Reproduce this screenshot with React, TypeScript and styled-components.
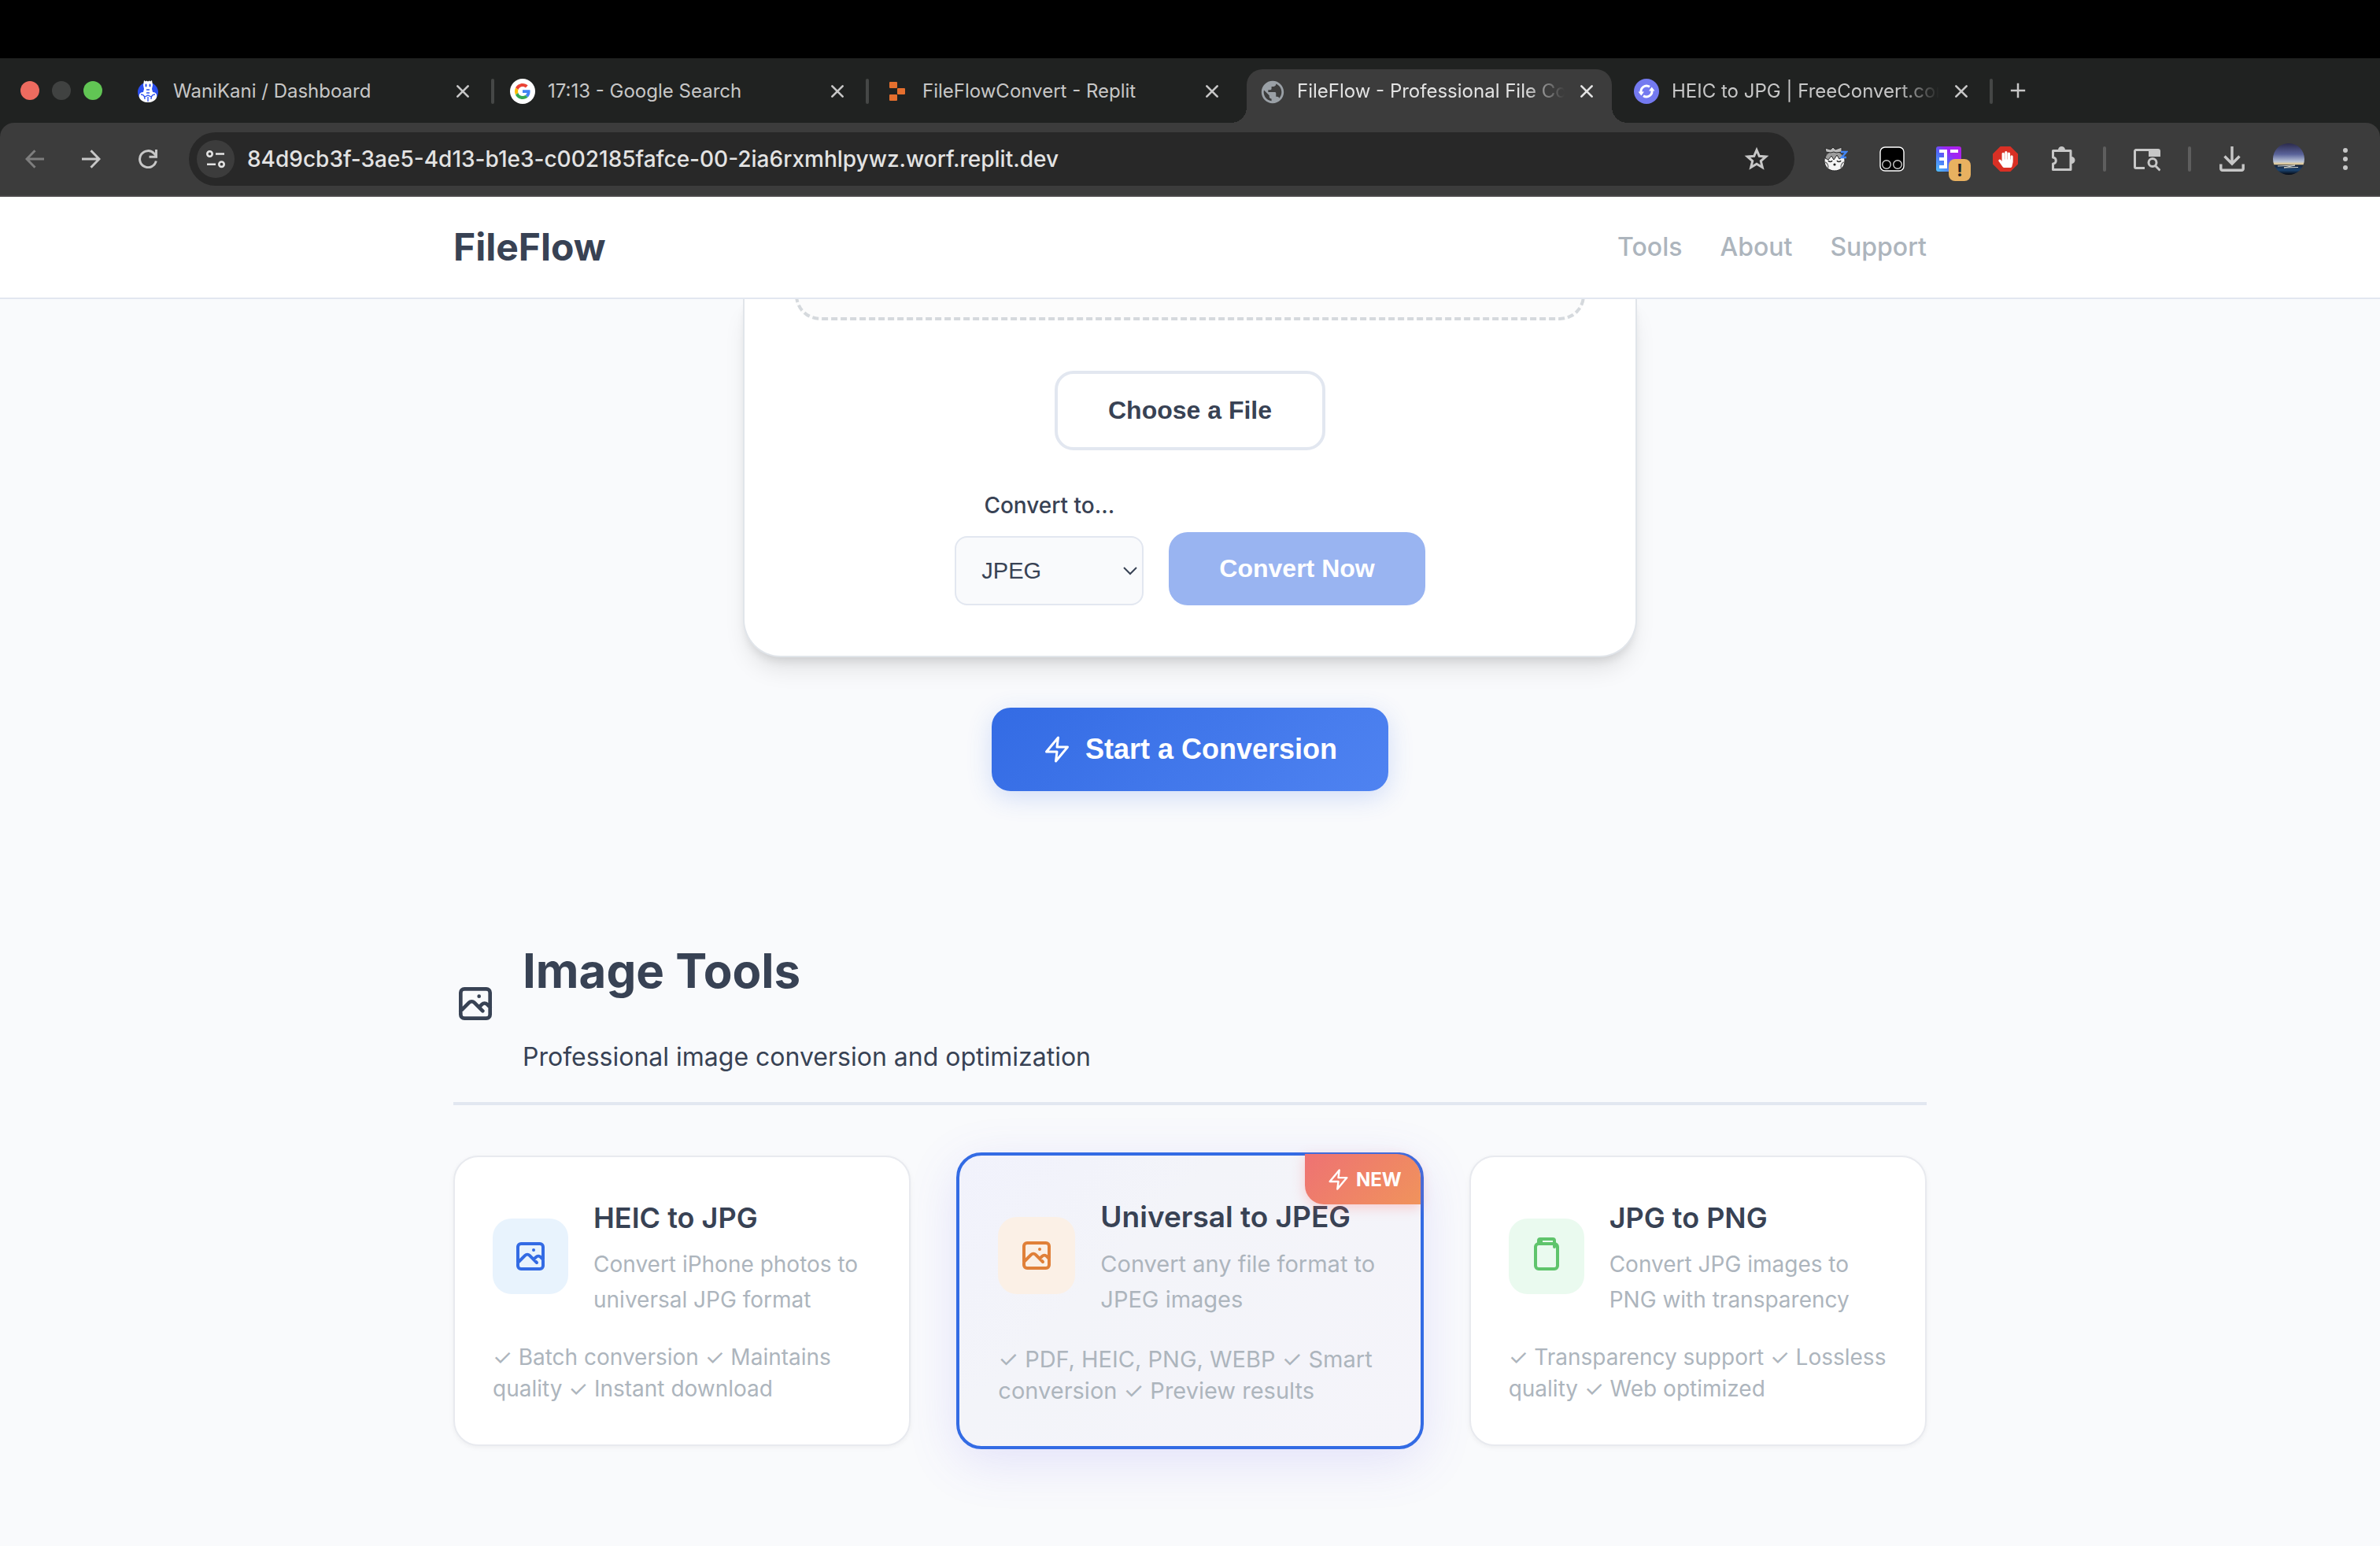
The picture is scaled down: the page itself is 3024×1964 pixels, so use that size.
import React, { ReactNode, useState } from 'react';
import styled, { createGlobalStyle, css } from 'styled-components';
import { MdPublic } from 'react-icons/md';
import { FaHandPaper } from 'react-icons/fa';

const color = {
  ink: '#384254',
  muted: '#adb5bd',
  line: '#e2e7f0',
  page: '#f9fafc',
  brand: '#336be4',
  strip: '#202221',
  toolbar: '#3c3c3c',
  omnibox: '#282828',
  chromeIcon: '#c7c7c7',
};

const ui = `Inter, 'Liberation Sans', sans-serif`;
const control = `'Liberation Sans', Arial, sans-serif`;

const GlobalStyle = createGlobalStyle`
  * { box-sizing: border-box; }
  body { margin: 0; background: ${color.page}; }
  h1, h2, h3, p { margin: 0; }
  button { border: 0; padding: 0; background: none; cursor: pointer; }
  svg { display: block; flex: none; }
`;

const Screen = styled.div`
  display: flex;
  flex-direction: column;
  height: 100vh;
  overflow: hidden;
  font-family: ${ui};
  color: ${color.ink};
`;

/* ---------- browser frame ---------- */

const Notch = styled.div`
  flex: none;
  height: 74px;
  background: #000;
`;

const TabStrip = styled.div`
  display: flex;
  flex: none;
  align-items: stretch;
  height: 82px;
  padding-left: 26px;
  background: ${color.strip};
`;

const Lights = styled.div`
  display: flex;
  align-items: center;
  gap: 16px;
  width: 126px;
`;

const Light = styled.span<{ $fill: string }>`
  width: 24px;
  height: 24px;
  border-radius: 50%;
  background: ${(p) => p.$fill};
`;

const Tab = styled.div<{ $active?: boolean }>`
  position: relative;
  display: flex;
  align-items: center;
  width: 476px;
  padding: 2px 0 0 20px;
  color: ${(p) => (p.$active ? '#e3e3e3' : '#c7c7c7')};

  ${(p) =>
    p.$active &&
    css`
      &::before {
        content: '';
        position: absolute;
        inset: 14px 8px 0 4px;
        border-radius: 20px 20px 0 0;
        background: ${color.toolbar};
      }
      &::after {
        content: '';
        position: absolute;
        left: -16px;
        right: -12px;
        bottom: 0;
        height: 20px;
        background: radial-gradient(circle at 0 0, transparent 20px, ${color.toolbar} 20px) left / 20px 20px no-repeat,
          radial-gradient(circle at 100% 0, transparent 20px, ${color.toolbar} 20px) right / 20px 20px no-repeat;
      }
      & > * {
        z-index: 1;
      }
    `}
`;

const Favicon = styled.span`
  display: grid;
  place-items: center;
  flex: none;
  width: 32px;
  height: 32px;
  margin-right: 16px;
`;

const TabTitle = styled.span<{ $fade?: boolean }>`
  flex: 1;
  min-width: 0;
  overflow: hidden;
  white-space: nowrap;
  font-size: 24px;
  line-height: 32px;
  ${(p) => p.$fade && 'mask-image: linear-gradient(to right, #000 288px, transparent 340px);'}
`;

const TabClose = styled.button`
  display: grid;
  place-items: center;
  flex: none;
  width: 32px;
  height: 32px;
  margin: 0 20px 0 8px;
  color: inherit;
`;

const TabRule = styled.span<{ $hidden?: boolean }>`
  flex: none;
  width: 4px;
  height: 32px;
  border-radius: 2px;
  background: ${(p) => (p.$hidden ? 'transparent' : '#454746')};
`;

const NewTab = styled.button`
  display: grid;
  place-items: center;
  width: 64px;
  color: ${color.chromeIcon};
`;

const ToolbarShell = styled.div`
  flex: none;
  background: ${color.strip};
`;

const Toolbar = styled.div`
  display: flex;
  align-items: center;
  height: 94px;
  padding: 0 8px;
  border-bottom: 2px solid #4a4749;
  border-radius: 18px 18px 0 0;
  background: ${color.toolbar};
`;

const ToolButton = styled.button<{ $dim?: boolean }>`
  position: relative;
  display: grid;
  place-items: center;
  flex: none;
  width: 72px;
  height: 68px;
  color: ${(p) => (p.$dim ? '#7e7e7e' : color.chromeIcon)};
`;

const ToolRule = styled.span`
  flex: none;
  width: 4px;
  height: 32px;
  margin: 0 16px;
  border-radius: 2px;
  background: #5e5e5e;
`;

const Omnibox = styled.div`
  display: flex;
  flex: 1;
  align-items: center;
  height: 68px;
  margin: 0 16px;
  padding: 0 12px 0 10px;
  border-radius: 34px;
  background: ${color.omnibox};
`;

const SiteInfo = styled.button`
  display: grid;
  place-items: center;
  width: 48px;
  height: 48px;
  border-radius: 50%;
  background: ${color.toolbar};
  color: #e3e3e3;
`;

const Address = styled.input`
  flex: 1;
  min-width: 0;
  height: 48px;
  margin-left: 16px;
  padding: 0;
  border: 0;
  outline: 0;
  background: none;
  color: #e3e3e3;
  font-family: ${ui};
  font-size: 28px;
  font-weight: 450;
`;

const AlertBadge = styled.span`
  position: absolute;
  left: 36px;
  top: 34px;
  width: 28px;
  height: 28px;
  border-radius: 8px;
  background: #e8b160;
  color: #202124;
  font: 700 22px/28px ${ui};
  text-align: center;
`;

const BlockSign = styled.span`
  display: grid;
  place-items: center;
  width: 32px;
  height: 32px;
  background: #d93025;
  color: #fff;
  clip-path: polygon(30% 0, 70% 0, 100% 30%, 100% 70%, 70% 100%, 30% 100%, 0 70%, 0 30%);
`;

/* ---------- page ---------- */

const SiteHeader = styled.header`
  z-index: 2;
  flex: none;
  padding: 0 64px;
  border-bottom: 2px solid ${color.line};
  background: #fff;
`;

const HeaderInner = styled.div`
  display: flex;
  align-items: center;
  justify-content: space-between;
  max-width: 1872px;
  height: 128px;
  margin: 0 auto;
`;

const Brand = styled.h1`
  font-size: 48px;
  font-weight: 700;
  line-height: 76px;
`;

const Nav = styled.nav`
  display: flex;
  gap: 48px;
`;

const NavLink = styled.a`
  color: ${color.muted};
  font-size: 32px;
  font-weight: 500;
  line-height: 52px;
  text-decoration: none;
`;

const Main = styled.main`
  display: flex;
  flex: 1;
  flex-direction: column;
  align-items: center;
  padding: 0 64px;
  background: ${color.page};
`;

const UploadCard = styled.section`
  display: flex;
  flex-direction: column;
  align-items: center;
  width: 100%;
  max-width: 1136px;
  padding: 0 64px 64px;
  border: 2px solid #e1e5ea;
  border-top: 0;
  border-radius: 0 0 48px 48px;
  background: #fff;
  box-shadow: 0 20px 30px -6px rgba(0, 0, 0, 0.1), 0 8px 12px -4px rgba(0, 0, 0, 0.1);
`;

const DropZoneClip = styled.div`
  align-self: stretch;
  display: flex;
  flex-direction: column;
  justify-content: flex-end;
  height: 27px;
  margin-bottom: 64px;
  overflow: hidden;
`;

const DropZone = styled.div`
  flex: none;
  height: 200px;
  border: 4px dashed #d5d9dd;
  border-radius: 32px;
  background: #fcfcfc;
`;

const Button = styled.button<{ $kind: 'outline' | 'solid' | 'hero' }>`
  display: inline-flex;
  align-items: center;
  justify-content: center;
  gap: 18px;
  border-radius: 24px;
  font-family: ${control};
  font-weight: 700;
  font-size: 32px;
  line-height: 37px;
  white-space: nowrap;

  ${(p) =>
    p.$kind === 'outline' &&
    css`
      padding: 28px 64px;
      border: 4px solid ${color.line};
      background: #fff;
      color: ${color.ink};
    `}
  ${(p) =>
    p.$kind === 'solid' &&
    css`
      padding: 28px 64px;
      background: #99b4f1;
      color: #fff;
    `}
  ${(p) =>
    p.$kind === 'hero' &&
    css`
      margin-top: 64px;
      padding: 32px 65px;
      background: linear-gradient(135deg, #336be4, #4f83f1);
      box-shadow: 0 8px 32px rgba(51, 107, 228, 0.2);
      color: #fff;
      font-size: 36px;
      line-height: 42px;
    `}
`;

const ConvertRow = styled.div`
  display: flex;
  align-items: flex-end;
  gap: 32px;
  margin-top: 48px;
`;

const Field = styled.div`
  display: flex;
  flex-direction: column;
  align-items: center;
  gap: 16px;
`;

const FieldLabel = styled.label`
  font-size: 28px;
  font-weight: 500;
  line-height: 45px;
`;

const SelectBox = styled.div`
  position: relative;
  width: 240px;

  svg {
    position: absolute;
    right: 8px;
    top: 38px;
    pointer-events: none;
  }
`;

const FormatSelect = styled.select`
  appearance: none;
  display: block;
  width: 100%;
  height: 88px;
  padding: 0 32px;
  border: 2px solid ${color.line};
  border-radius: 16px;
  background: #f9fafc;
  color: ${color.ink};
  font-family: ${control};
  font-size: 29px;
`;

const ToolSection = styled.section`
  width: 100%;
  max-width: 1872px;
  margin-top: 177px;
`;

const SectionHead = styled.div`
  display: flex;
  align-items: center;
  gap: 32px;
  padding-bottom: 32px;
  border-bottom: 4px solid ${color.line};
`;

const SectionTitle = styled.h2`
  margin-bottom: 32px;
  font-size: 60px;
  font-weight: 700;
  line-height: 103px;
`;

const SectionText = styled.p`
  font-size: 32px;
  line-height: 51px;
`;

const CardGrid = styled.div`
  display: grid;
  grid-template-columns: repeat(3, 1fr);
  gap: 64px;
  margin-top: 64px;
`;

const CardHead = styled.div`
  display: flex;
  align-items: center;
  gap: 32px;
  margin-bottom: 30px;
`;

const Tile = styled.span<{ $bg: string; $fg: string }>`
  display: grid;
  place-items: center;
  flex: none;
  width: 96px;
  height: 96px;
  border-radius: 24px;
  background: ${(p) => p.$bg};
  color: ${(p) => p.$fg};
`;

const CardTitle = styled.h3`
  margin-bottom: 8px;
  font-size: 36px;
  font-weight: 600;
  line-height: 58px;
  white-space: nowrap;
`;

const CardText = styled.p`
  color: ${color.muted};
  font-size: 28px;
  line-height: 45px;
`;

const Features = styled.p`
  color: ${color.muted};
  font-size: 28px;
  line-height: 40px;
`;

const ToolCard = styled.article<{ $featured?: boolean }>`
  position: relative;
  padding: 48px 48px 51px;
  border: 2px solid #e8eaef;
  border-radius: 32px;
  background: #fff;
  box-shadow: 0 2px 6px rgba(0, 0, 0, 0.05);

  ${(p) =>
    p.$featured &&
    css`
      margin: -4px -6px;
      padding: 49px 48px 48px 49px;
      border: 4px solid ${color.brand};
      background: linear-gradient(135deg, #f1f2fc, #f3f4f9 35%, #f5f4fa);
      box-shadow: 0 16px 64px rgba(102, 90, 234, 0.15);

      ${CardHead} {
        margin-bottom: 34px;
      }
      ${Tile} {
        width: 98px;
        height: 98px;
      }
      ${CardTitle} {
        font-size: 37px;
      }
      ${CardText}, ${Features} {
        font-size: 29px;
      }
    `}
`;

const NewBadge = styled.span`
  position: absolute;
  top: -2px;
  right: 0;
  display: flex;
  align-items: center;
  gap: 8px;
  height: 64px;
  padding: 0 24px 0 28px;
  border-radius: 0 30px 0 24px;
  background: linear-gradient(135deg, #ee7273, #f0935c);
  box-shadow: 0 4px 16px rgba(255, 107, 107, 0.3);
  color: #fff;
  font-size: 24px;
  font-weight: 700;
`;

/* ---------- icons ---------- */

type IconProps = { size: number };

const Stroke = ({ size, width = 2, children }: IconProps & { width?: number; children: ReactNode }) => (
  <svg
    width={size}
    height={size}
    viewBox="0 0 24 24"
    fill="none"
    stroke="currentColor"
    strokeWidth={width}
    strokeLinecap="round"
    strokeLinejoin="round"
    overflow="visible"
    aria-hidden="true"
  >
    {children}
  </svg>
);

const PhotoIcon = ({ size }: IconProps) => (
  <Stroke size={size}>
    <path d="M4 16l4.586-4.586a2 2 0 012.828 0L16 16m-2-2l1.586-1.586a2 2 0 012.828 0L20 14m-6-6h.01M6 20h12a2 2 0 002-2V6a2 2 0 00-2-2H6a2 2 0 00-2 2v12a2 2 0 002 2z" />
  </Stroke>
);

const JarIcon = ({ size }: IconProps) => (
  <Stroke size={size}>
    <path d="M7 4V2a1 1 0 011-1h8a1 1 0 011 1v4M7 4h10M7 4a2 2 0 00-2 2v12a2 2 0 002 2h10a2 2 0 002-2V6a2 2 0 00-2-2M8.5 3.5V2" />
  </Stroke>
);

const ZapIcon = ({ size }: IconProps) => (
  <Stroke size={size}>
    <path d="M13 2L3 14h9l-1 8 10-12h-9l1-8z" />
  </Stroke>
);

const CloseIcon = () => (
  <Stroke size={16} width={4}>
    <path d="M2 2l20 20M22 2L2 22" />
  </Stroke>
);

const PlusIcon = () => (
  <Stroke size={20} width={3}>
    <path d="M12 1v22M1 12h22" strokeLinecap="butt" />
  </Stroke>
);

const BackIcon = () => (
  <svg width="24" height="24" viewBox="0 0 24 24" fill="none" stroke="currentColor" strokeWidth="3" aria-hidden="true">
    <path d="M24 12H2.5M12.5 1.2L2 12l10.5 10.8" />
  </svg>
);

const ForwardIcon = () => (
  <svg width="24" height="24" viewBox="0 0 24 24" fill="none" stroke="currentColor" strokeWidth="3" aria-hidden="true">
    <path d="M0 12h21.5M11.5 1.2L22 12 11.5 22.8" />
  </svg>
);

const ReloadIcon = () => (
  <svg width="24" height="24" viewBox="0 0 24 24" fill="none" stroke="currentColor" strokeWidth="3" aria-hidden="true">
    <path d="M22.3 14.5A10.5 10.5 0 1 1 19.8 5L22 7.5" />
    <path d="M22.5 0v9.2h-9" />
  </svg>
);

const TuneIcon = () => (
  <svg width="24" height="24" viewBox="0 0 24 24" fill="none" stroke="currentColor" strokeWidth="2.6" aria-hidden="true">
    <circle cx="4.5" cy="5.5" r="3.2" />
    <path d="M12 5.5h11M1 18.7h11" />
    <circle cx="19.5" cy="18.7" r="3.2" />
  </svg>
);

const StarIcon = () => (
  <svg width="32" height="32" viewBox="0 0 32 32" fill="none" stroke="currentColor" strokeWidth="3" aria-hidden="true">
    <path d="M16 4.5l3.3 7.8 8.4.7-6.4 5.5 2 8.2L16 22.3l-7.3 4.4 2-8.2L4.3 13l8.4-.7z" />
  </svg>
);

const ChevronIcon = () => (
  <svg width="18" height="12" viewBox="0 0 18 12" fill="none" stroke={color.ink} strokeWidth="2" aria-hidden="true">
    <path d="M1 2l8 8 8-8" />
  </svg>
);

const GoogleIcon = () => (
  <svg width="32" height="32" viewBox="0 0 32 32" aria-hidden="true">
    <circle cx="16" cy="16" r="16" fill="#fff" />
    <g transform="translate(6 6) scale(.4167)">
      <path fill="#EA4335" d="M24 9.5c3.54 0 6.71 1.22 9.21 3.6l6.85-6.85C35.9 2.38 30.47 0 24 0 14.62 0 6.51 5.38 2.56 13.22l7.98 6.19C12.43 13.72 17.74 9.5 24 9.5z" />
      <path fill="#4285F4" d="M46.98 24.55c0-1.57-.15-3.09-.38-4.55H24v9.02h12.94c-.58 2.96-2.26 5.48-4.78 7.18l7.73 6c4.51-4.18 7.09-10.36 7.09-17.65z" />
      <path fill="#FBBC05" d="M10.53 28.59c-.48-1.45-.76-2.99-.76-4.59s.27-3.14.76-4.59l-7.98-6.19C.92 16.46 0 20.12 0 24s.92 7.54 2.56 10.78l7.97-6.19z" />
      <path fill="#34A853" d="M24 48c6.48 0 11.93-2.13 15.89-5.81l-7.73-6c-2.15 1.45-4.92 2.3-8.16 2.3-6.26 0-11.57-4.22-13.47-9.91l-7.98 6.19C6.51 42.62 14.62 48 24 48z" />
    </g>
  </svg>
);

const CrocIcon = () => (
  <svg width="28" height="30" viewBox="0 0 28 30" aria-hidden="true">
    <ellipse cx="14" cy="16" rx="13" ry="12.5" fill="#2b4ff0" />
    <path d="M9 1l2 1.5 1-1 2 1 2-1 1 1L19 1l1 6-1 5 1 4c4 0 6 3 5 7-2 4-6 6-11 6s-9-2-11-6c-1-4 1-7 5-7l1-4-1-5z" fill="#fff" />
    <path d="M11.5 6.500v2M16.500 6.500v2" stroke="#2b4ff0" strokeWidth="2" strokeLinecap="round" />
    <path d="M12 13h4M12 17h4M5 19c3 0 5 2 5 6M23 19c-3 0-5 2-5 6M10 22l4-2 4 2M14 22v6" stroke="#2b4ff0" strokeWidth="1.3" fill="none" />
  </svg>
);

const ReplitIcon = () => (
  <svg width="20" height="24" viewBox="0 0 20 24" fill="#e56f2e" aria-hidden="true">
    <rect width="10" height="8" rx="1" />
    <rect x="10" y="8" width="10" height="8" rx="1" />
    <rect y="16" width="10" height="8" rx="1" />
  </svg>
);

const ConvertIcon = () => (
  <svg width="32" height="32" viewBox="0 0 32 32" aria-hidden="true">
    <circle cx="16" cy="16" r="16" fill="#747af0" />
    <g fill="none" stroke="#fff" strokeWidth="3">
      <path d="M9.300 18A7 7 0 0 1 20 10.300" />
      <path d="M22.700 14A7 7 0 0 1 12 21.700" />
    </g>
    <path d="M5.500 16.500h7.500l-3.700 5zM19 15.500h7.500l-3.800-5z" fill="#fff" />
  </svg>
);

const SleepyIcon = () => (
  <svg width="32" height="32" viewBox="0 0 32 32" aria-hidden="true">
    <path d="M2 18c0-8 5-12 13-12s13 5 13 12c0 8-6 13-13 13S2 26 2 18z" fill="#f4f4f4" stroke="#2a2a2a" strokeWidth="1" />
    <path d="M3 15c1-6 6-9 12-9 5 0 9 3 11 7l-5 3-3-5-4 6-3-5-4 5z" fill="#9c9c9c" stroke="#2a2a2a" strokeWidth="1" />
    <path d="M3 2l7 2 3-3 3 3 8-3v6l-7 1-3-1-4 1-6-1z" fill="#bdbdbd" stroke="#2a2a2a" strokeWidth="1" />
    <path d="M7 18c1 2 4 2 5 0M18 18c1 2 4 2 5 0" stroke="#222" strokeWidth="1.6" fill="none" />
    <circle cx="15" cy="23" r="1.6" fill="#222" />
    <path d="M3 20c3 1 4 4 4 7M27 20c-3 1-4 4-4 7" stroke="#777" strokeWidth="1.4" fill="none" />
    <path d="M23 7h7l-6 7h6" stroke="#4285f4" strokeWidth="2.4" fill="none" />
  </svg>
);

const MonkeyIcon = () => (
  <svg width="32" height="32" viewBox="0 0 32 32" aria-hidden="true">
    <rect x="1" y="1" width="30" height="30" rx="6" fill="#000" stroke="#fff" strokeWidth="1.4" />
    <circle cx="9" cy="23" r="5.3" fill="none" stroke="#d0d0d0" strokeWidth="1.4" />
    <circle cx="23" cy="23" r="5.3" fill="none" stroke="#d0d0d0" strokeWidth="1.4" />
  </svg>
);

const BlocksIcon = () => (
  <svg width="32" height="32" viewBox="0 0 32 32" aria-hidden="true">
    <defs>
      <linearGradient id="blocks" x1="0" y1="1" x2="1" y2="0">
        <stop offset="0" stopColor="#4fc3ff" />
        <stop offset=".4" stopColor="#4d6bf5" />
        <stop offset=".65" stopColor="#9b27f5" />
        <stop offset="1" stopColor="#b51de8" />
      </linearGradient>
    </defs>
    <rect width="32" height="32" rx="3" fill="url(#blocks)" />
    <path d="M4 4h10v24H4v-4h6v-6H4v-4h6V8H4zM18 4h10v4H18z" fill="#fff" />
  </svg>
);

const PuzzleIcon = () => (
  <svg width="34" height="34" viewBox="-1 0 34 34" fill="none" stroke="currentColor" strokeWidth="3" strokeLinejoin="round" aria-hidden="true">
    <path d="M4.500 6.500h22.500v24H4.500v-7.500c5 0 5-8 0-8z" />
    <path d="M11 5.500a4.500 4.500 0 0 1 9 0zM28 14a4.500 4.500 0 0 1 0 9z" fill="currentColor" stroke="none" />
  </svg>
);

const TabSearchIcon = () => (
  <svg width="34" height="32" viewBox="0 0 34 32" fill="none" stroke="currentColor" strokeWidth="3" aria-hidden="true">
    <path d="M14 27.5H3a1.500 1.500 0 0 1-1.500-1.500V6A1.500 1.500 0 0 1 3 4.500h28A1.500 1.500 0 0 1 32.500 6v7" />
    <path d="M19 4h14v9H19z" fill="currentColor" stroke="none" />
    <circle cx="24" cy="20.500" r="5" />
    <path d="M27.500 24.500l6 6" />
  </svg>
);

const DownloadIcon = () => (
  <svg width="32" height="32" viewBox="0 0 32 32" fill="none" stroke="currentColor" strokeWidth="3.4" aria-hidden="true">
    <path d="M16 0v21M6.500 12.500L16 22l9.500-9.500M1.800 22.500v6a1.800 1.800 0 0 0 1.800 1.800h24.800a1.800 1.800 0 0 0 1.800-1.800v-6" />
  </svg>
);

const Avatar = () => (
  <svg width="40" height="40" viewBox="0 0 40 40" aria-hidden="true">
    <defs>
      <linearGradient id="dusk" x1="0" y1="0" x2="0" y2="1">
        <stop offset="0" stopColor="#2b2a4c" />
        <stop offset=".35" stopColor="#5a639a" />
        <stop offset=".58" stopColor="#b9c4d8" />
        <stop offset=".66" stopColor="#e8cf98" />
        <stop offset=".7" stopColor="#18253c" />
        <stop offset=".85" stopColor="#1b4470" />
        <stop offset="1" stopColor="#05070f" />
      </linearGradient>
    </defs>
    <circle cx="20" cy="20" r="20" fill="url(#dusk)" />
    <path d="M6 29l22-1-14 3 18-.5" stroke="#d8d8cf" strokeWidth="1" fill="none" />
  </svg>
);

const DotsIcon = () => (
  <svg width="8" height="28" viewBox="0 0 8 28" fill="currentColor" aria-hidden="true">
    <circle cx="4" cy="3" r="3" />
    <circle cx="4" cy="14" r="3" />
    <circle cx="4" cy="25" r="3" />
  </svg>
);

/* ---------- data ---------- */

const tabs = [
  { title: 'WaniKani / Dashboard', icon: <CrocIcon /> },
  { title: '17:13 - Google Search', icon: <GoogleIcon /> },
  { title: 'FileFlowConvert - Replit', icon: <ReplitIcon />, hideRule: true },
  {
    title: 'FileFlow - Professional File Converter',
    icon: <MdPublic size={34} color="#9aa0a6" />,
    active: true,
    fade: true,
    hideRule: true,
  },
  { title: 'HEIC to JPG | FreeConvert.com', icon: <ConvertIcon />, fade: true },
];

const tools = [
  {
    title: 'HEIC to JPG',
    text: 'Convert iPhone photos to universal JPG format',
    features: ['Batch conversion', 'Maintains quality', 'Instant download'],
    bg: '#e8f3fd',
    fg: '#336be4',
    Icon: PhotoIcon,
  },
  {
    title: 'Universal to JPEG',
    text: 'Convert any file format to JPEG images',
    features: ['PDF, HEIC, PNG, WEBP', 'Smart conversion', 'Preview results'],
    bg: '#fbf0e6',
    fg: '#e08039',
    Icon: PhotoIcon,
    featured: true,
  },
  {
    title: 'JPG to PNG',
    text: 'Convert JPG images to PNG with transparency',
    features: ['Transparency support', 'Lossless quality', 'Web optimized'],
    bg: '#eafaef',
    fg: '#5fc46c',
    Icon: JarIcon,
  },
];

const Browser = () => {
  const [url, setUrl] = useState('84d9cb3f-3ae5-4d13-b1e3-c002185fafce-00-2ia6rxmhlpywz.worf.replit.dev');
  return (
    <>
      <Notch />
      <TabStrip>
        <Lights>
          <Light $fill="#ed6b5f" />
          <Light $fill="#404241" />
          <Light $fill="#61c554" />
        </Lights>
        {tabs.map((t) => (
          <Tab key={t.title} $active={t.active}>
            <Favicon>{t.icon}</Favicon>
            <TabTitle $fade={t.fade}>{t.title}</TabTitle>
            <TabClose aria-label="Close tab">
              <CloseIcon />
            </TabClose>
            <TabRule $hidden={t.hideRule} />
          </Tab>
        ))}
        <NewTab aria-label="New tab">
          <PlusIcon />
        </NewTab>
      </TabStrip>
      <ToolbarShell>
        <Toolbar>
          <ToolButton $dim aria-label="Back"><BackIcon /></ToolButton>
          <ToolButton aria-label="Forward"><ForwardIcon /></ToolButton>
          <ToolButton aria-label="Reload"><ReloadIcon /></ToolButton>
          <Omnibox>
            <SiteInfo aria-label="Site information"><TuneIcon /></SiteInfo>
            <Address aria-label="Address" value={url} onChange={(e) => setUrl(e.target.value)} spellCheck={false} />
            <ToolButton aria-label="Bookmark"><StarIcon /></ToolButton>
          </Omnibox>
          <ToolButton aria-label="Sleepy extension"><SleepyIcon /></ToolButton>
          <ToolButton aria-label="Userscripts"><MonkeyIcon /></ToolButton>
          <ToolButton aria-label="Blocks extension">
            <BlocksIcon />
            <AlertBadge>!</AlertBadge>
          </ToolButton>
          <ToolButton aria-label="Ad blocker">
            <BlockSign><FaHandPaper size={21} /></BlockSign>
          </ToolButton>
          <ToolButton aria-label="Extensions"><PuzzleIcon /></ToolButton>
          <ToolRule />
          <ToolButton aria-label="Search tabs"><TabSearchIcon /></ToolButton>
          <ToolRule />
          <ToolButton aria-label="Downloads"><DownloadIcon /></ToolButton>
          <ToolButton aria-label="Profile"><Avatar /></ToolButton>
          <ToolButton aria-label="Menu"><DotsIcon /></ToolButton>
        </Toolbar>
      </ToolbarShell>
    </>
  );
};

export default function App() {
  return (
    <Screen>
      <GlobalStyle />
      <Browser />
      <SiteHeader>
        <HeaderInner>
          <Brand>FileFlow</Brand>
          <Nav>
            <NavLink href="#tools">Tools</NavLink>
            <NavLink href="#about">About</NavLink>
            <NavLink href="#support">Support</NavLink>
          </Nav>
        </HeaderInner>
      </SiteHeader>
      <Main>
        <UploadCard>
          <DropZoneClip>
            <DropZone />
          </DropZoneClip>
          <Button $kind="outline">Choose a File</Button>
          <ConvertRow>
            <Field>
              <FieldLabel htmlFor="format">Convert to...</FieldLabel>
              <SelectBox>
                <FormatSelect id="format" defaultValue="JPEG">
                  <option>JPEG</option>
                  <option>PNG</option>
                  <option>WEBP</option>
                </FormatSelect>
                <ChevronIcon />
              </SelectBox>
            </Field>
            <Button $kind="solid">Convert Now</Button>
          </ConvertRow>
        </UploadCard>
        <Button $kind="hero">
          <ZapIcon size={36} />
          Start a Conversion
        </Button>
        <ToolSection id="tools">
          <SectionHead>
            <PhotoIcon size={56} />
            <div>
              <SectionTitle>Image Tools</SectionTitle>
              <SectionText>Professional image conversion and optimization</SectionText>
            </div>
          </SectionHead>
          <CardGrid>
            {tools.map(({ title, text, features, bg, fg, Icon, featured }) => (
              <ToolCard key={title} $featured={featured}>
                <CardHead>
                  <Tile $bg={bg} $fg={fg}>
                    <Icon size={48} />
                  </Tile>
                  <div>
                    <CardTitle>{title}</CardTitle>
                    <CardText>{text}</CardText>
                  </div>
                </CardHead>
                <Features>{features.map((f) => `✓ ${f}`).join(' ')}</Features>
                {featured && (
                  <NewBadge>
                    <ZapIcon size={29} />
                    NEW
                  </NewBadge>
                )}
              </ToolCard>
            ))}
          </CardGrid>
        </ToolSection>
      </Main>
    </Screen>
  );
}
